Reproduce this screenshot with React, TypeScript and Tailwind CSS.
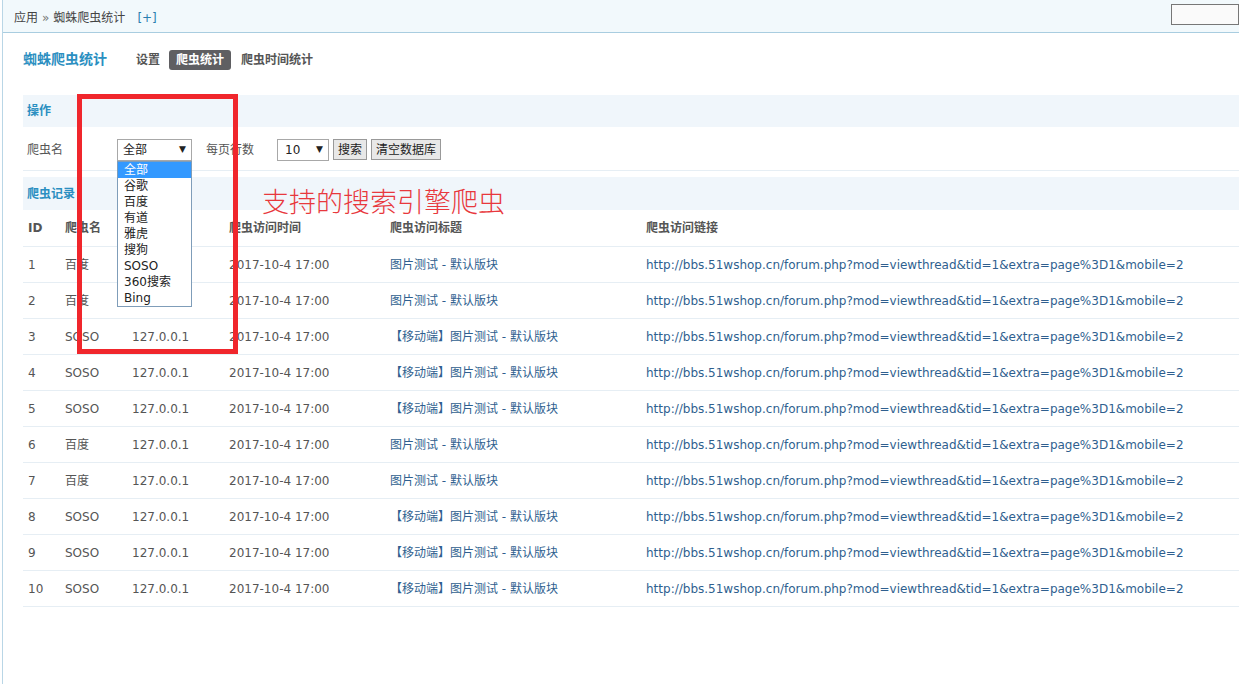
import React from "react";

const rows = [
  { id: 1, name: "百度", ip: "127.0.0.1", mobile: false },
  { id: 2, name: "百度", ip: "127.0.0.1", mobile: false },
  { id: 3, name: "SOSO", ip: "127.0.0.1", mobile: true },
  { id: 4, name: "SOSO", ip: "127.0.0.1", mobile: true },
  { id: 5, name: "SOSO", ip: "127.0.0.1", mobile: true },
  { id: 6, name: "百度", ip: "127.0.0.1", mobile: false },
  { id: 7, name: "百度", ip: "127.0.0.1", mobile: false },
  { id: 8, name: "SOSO", ip: "127.0.0.1", mobile: true },
  { id: 9, name: "SOSO", ip: "127.0.0.1", mobile: true },
  { id: 10, name: "SOSO", ip: "127.0.0.1", mobile: true },
];

const engines = ["全部", "谷歌", "百度", "有道", "雅虎", "搜狗", "SOSO", "360搜索", "Bing"];

const link = "http://bbs.51wshop.cn/forum.php?mod=viewthread&tid=1&extra=page%3D1&mobile=2";

const font = "font-['Tahoma','DejaVu_Sans','Noto_Sans_CJK_SC',sans-serif]";

export default function App() {
  return (
    <div className={`relative h-[684px] w-[1239px] overflow-hidden bg-white text-[12px] text-[#555] ${font}`}>
      <div className="ml-[2px] h-full border-l border-[#b9d6e6]">
        {/* top bar */}
        <div className="flex h-[33px] items-start justify-between border-b border-[#a9cde0] bg-[#f2f9fc] pl-[11px]">
          <div className="mt-[9px] flex items-center gap-1 text-[#444]">
            <span>应用</span>
            <span className="text-[#777]">»</span>
            <span>蜘蛛爬虫统计</span>
            <span className="ml-2 text-[#2a7fb0]">[+]</span>
          </div>
          <div className="mt-[4px] h-[21px] w-[68px] border border-[#777] bg-[#fafafa]" />
        </div>

        {/* title & tabs */}
        <div className="flex h-[53px] items-center pl-[20px]">
          <span className="text-[14px] font-bold text-[#2b8fc1]">蜘蛛爬虫统计</span>
          <span className="ml-[29px] font-bold text-[#555]">设置</span>
          <span className="ml-[9px] rounded-[3px] bg-[#5f5f62] px-[7px] py-[1px] font-bold text-white">爬虫统计</span>
          <span className="ml-[10px] font-bold text-[#555]">爬虫时间统计</span>
        </div>

        <div className="ml-[20px] mt-[9px]">
          {/* operation */}
          <div className="flex h-[32px] items-center bg-[#f0f6fb] pl-[4px] font-bold text-[#2b8fc1]">操作</div>
          <div className="flex h-[44px] items-center border-b border-[#e6eef4] pl-[4px] pt-[2px]">
            <span className="w-[90px]">爬虫名</span>
            <div className="relative">
              <div className="flex h-[22px] w-[75px] items-center justify-between border border-[#a8a8a8] bg-white pl-[5px] pr-[5px] text-[#222]">
                <span>全部</span>
                <span className="text-[9px]">▼</span>
              </div>
              <div className="absolute left-0 top-[22px] z-10 w-[75px] border border-[#7f9db9] bg-white text-[#222] leading-[16px]">
                {engines.map((e, i) => (
                  <div key={e} className={i === 0 ? "bg-[#3399ff] pl-[6px] text-white" : "pl-[6px]"}>
                    {e}
                  </div>
                ))}
              </div>
            </div>
            <span className="ml-[14px] w-[71px]">每页行数</span>
            <div className="flex h-[22px] w-[52px] items-center justify-between border border-[#a8a8a8] bg-white pl-[7px] pr-[5px] text-[#222]">
              <span>10</span>
              <span className="text-[9px]">▼</span>
            </div>
            <button className="ml-[4px] h-[21px] border border-[#999] bg-[#e8e8e8] px-[4px] text-[#222]">搜索</button>
            <button className="ml-[4px] h-[21px] border border-[#999] bg-[#e8e8e8] px-[4px] text-[#222]">清空数据库</button>
          </div>

          {/* records */}
          <div className="mt-[6px] flex h-[33px] items-center bg-[#f0f6fb] pl-[4px] font-bold text-[#2b8fc1]">爬虫记录</div>
          <div className="flex h-[37px] items-center border-b border-[#e6eef4] pl-[5px] font-bold text-[#555]">
            <span className="w-[37px]">ID</span>
            <span className="w-[67px]">爬虫名</span>
            <span className="w-[97px]">爬虫IP</span>
            <span className="w-[161px]">爬虫访问时间</span>
            <span className="w-[256px]">爬虫访问标题</span>
            <span>爬虫访问链接</span>
          </div>
          {rows.map((r) => (
            <div key={r.id} className="flex h-[36px] items-center border-b border-[#e6eef4] pl-[5px]">
              <span className="w-[37px]">{r.id}</span>
              <span className="w-[67px]">{r.name}</span>
              <span className="w-[97px]">{r.ip}</span>
              <span className="w-[161px]">2017-10-4 17:00</span>
              <span className="w-[256px] text-[#2f5f8f]">
                {r.mobile ? "【移动端】图片测试 - 默认版块" : "图片测试 - 默认版块"}
              </span>
              <span className="text-[#2f5f8f]">{link}</span>
            </div>
          ))}
        </div>
      </div>

      {/* annotation overlay */}
      <div className="absolute left-[77px] top-[94px] h-[260px] w-[161px] border-[5px] border-[#f0262c]" />
      <div className="absolute left-[262px] top-[185px] text-[27px] font-light leading-[32px] text-[#e8383d] font-['Noto_Sans_CJK_SC',sans-serif]">
        支持的搜索引擎爬虫
      </div>
    </div>
  );
}
